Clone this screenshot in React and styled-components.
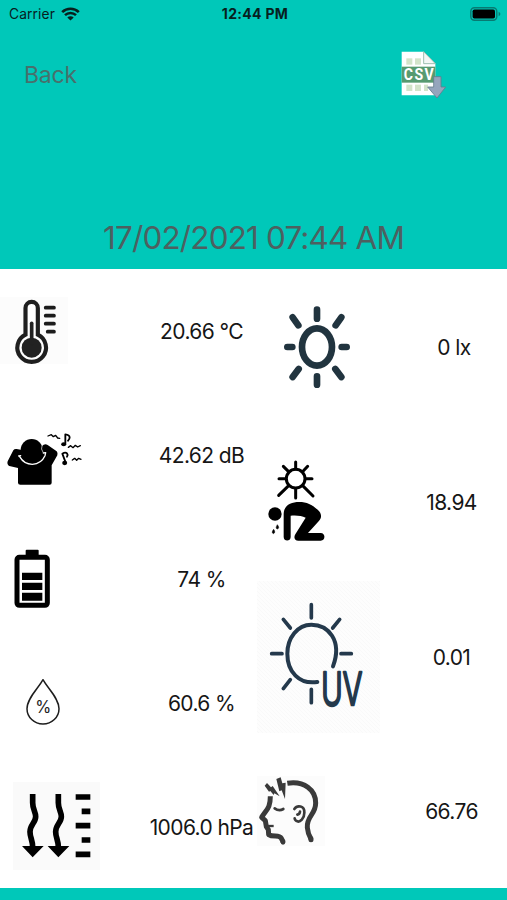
import React from 'react';
import styled, { createGlobalStyle } from 'styled-components';

const GlobalStyle = createGlobalStyle`
  *{
    box-sizing:border-box;
  }
  body{
    margin:0;
    background-color:#ffffff;
    font-family:Inter, "Liberation Sans", sans-serif;
  }
  svg{
    display:block;
    flex:none;
    overflow:visible;
  }
`;

const Screen = styled.div`
  width:507px;
  height:900px;
  display:flex;
  flex-direction:column;
  overflow:hidden;
  background-color:white;
`;

const Header = styled.header`
  height:269px;
  display:flex;
  flex-direction:column;
  background-color:#00c8b9;
`;

const StatusBar = styled.div`
  height:27px;
  padding:0 6px 0 9px;
  display:grid;
  grid-template-columns:1fr auto 1fr;
  align-items:center;
  color:#07201e;
`;
const Carrier = styled.div`
  display:flex;
  align-items:center;
  gap:6px;
  font-size:13.8px;
  letter-spacing:0.1px;
`;
const Clock = styled.div`
  font-size:14px;
  font-weight:700;
  letter-spacing:0.3px;
`;
const StatusRight = styled.div`
  display:flex;
  justify-content:flex-end;
`;

const NavBar = styled.nav`
  height:96px;
  padding:0 60px 0 24px;
  display:flex;
  align-items:center;
  justify-content:space-between;
`;
const BackButton = styled.button`
  padding:0;
  border:0;
  background:none;
  font-family:inherit;
  font-size:23px;
  letter-spacing:-0.2px;
  color:#48706c;
`;
const CsvButton = styled.button`
  padding:0;
  border:0;
  background:none;
`;
const DateTitle = styled.h1`
  margin:auto 0 0;
  height:61px;
  line-height:61px;
  text-align:center;
  font-size:31.4px;
  font-weight:400;
  letter-spacing:-0.8px;
  color:#4d6060;
`;

const Readings = styled.main`
  flex:1;
  display:grid;
  grid-template-columns:253px 254px;
`;
const Column = styled.section`
  display:grid;
  grid-template-columns:minmax(0, 1fr);
  grid-template-rows:${(props) => props.$rows};
`;
const Reading = styled.div`
  display:flex;
  align-items:center;
`;
const IconSlot = styled.div`
  width:${(props) => props.$width}px;
  flex:none;
  align-self:flex-start;
  padding-left:${(props) => props.$left}px;
  padding-top:${(props) => props.$top}px;
`;
const Value = styled.div`
  flex:1;
  min-width:0;
  padding-top:2px;
  display:flex;
  justify-content:center;
  white-space:nowrap;
  font-size:21px;
  line-height:26px;
  letter-spacing:-0.6px;
  color:#161616;
`;

const Footer = styled.footer`
  height:12px;
  background-color:#00c8b9;
`;

const WifiIcon = () => (
  <svg width="19" height="14" viewBox="0 0 19 14" fill="none" stroke="#07201e">
    <path d="M1.2 5.1 A12 12 0 0 1 17.8 5.1" strokeWidth="2.7" />
    <path d="M4 8.2 A7.8 7.8 0 0 1 15 8.2" strokeWidth="2.5" />
    <path d="M9.5 13.6 L6.3 10.5 A4.6 4.6 0 0 1 12.7 10.5 Z" fill="#07201e" stroke="none" />
  </svg>
);

const PhoneBattery = () => (
  <svg width="31" height="14" viewBox="0 0 31 14">
    <rect x="0.8" y="0.8" width="26" height="12.4" rx="3.6" fill="none" stroke="#087a72" strokeWidth="1.4" />
    <rect x="2.6" y="2.4" width="22.4" height="9.2" rx="1.8" fill="#000000" />
    <path d="M28.6 4.8 Q30.4 5.6 30.4 7 Q30.4 8.4 28.6 9.2 Z" fill="#087a72" />
  </svg>
);

const CsvIcon = () => (
  <svg width="46" height="48" viewBox="35 35 138 144">
    <path d="M37 37 H103 L138 73 V168 H37 Z" fill="#ffffff" />
    <path d="M103 37 V73 H138 Z" fill="#f4f7f5" stroke="#9dbfb0" strokeWidth="3" strokeLinejoin="round" />
    <g fill="#d3e4ca">
      <rect x="51" y="57" width="18" height="19" />
      <rect x="77" y="57" width="18" height="19" />
      <rect x="51" y="136" width="18" height="19" />
      <rect x="77" y="136" width="18" height="19" />
      <rect x="104" y="136" width="12" height="19" />
    </g>
    <rect x="37" y="82" width="101" height="48" fill="#579a70" />
    <text transform="translate(43 123) scale(0.9 1)" fontFamily="Roboto, sans-serif" fontSize="47" fontWeight="700" letterSpacing="5" fill="#ffffff">CSV</text>
    <path d="M133 112 H155 V143 H169 L143 176 L115 143 H133 Z" fill="#95a5bd" stroke="#647d8d" strokeWidth="2.5" />
  </svg>
);

const ThermometerIcon = () => (
  <svg width="68" height="67" viewBox="0 21 204 201">
    <rect y="21" width="204" height="201" fill="#fcfcfc" />
    <path
      d="M76.5 134 V54 A18.5 18.5 0 0 1 113.5 54 V134 A43 43 0 1 1 76.5 134 Z"
      fill="#ffffff" stroke="#1f1f1f" strokeWidth="12.5"
    />
    <circle cx="95" cy="173" r="30" fill="#222222" />
    <path d="M95 100 V160" stroke="#222222" strokeWidth="11" strokeLinecap="round" />
    <path d="M137 53 H162 M137 77 H162 M137 101 H162 M143 125 H162" stroke="#1c1c1c" strokeWidth="11" strokeLinecap="round" />
  </svg>
);

const NoiseIcon = () => (
  <svg width="84" height="58" viewBox="0 420 252 174" fill="none" stroke="#000000" strokeLinecap="round" strokeLinejoin="round">
    <path d="M50 477 L66 480 L126 468 Q134 460 143 465 L170 484 Q174 489 172 496 L155 526 V578 Q155 584 149 584 H61 Q54 584 54 578 V534 L28 528 Q20 524 23 514 L40 481 Q43 476 50 477 Z" fill="#000000" stroke="none" />
    <circle cx="95" cy="480" r="33" fill="#000000" stroke="none" />
    <path d="M56 498 L62 497 M59 500 Q72 523 97 523 Q124 521 135 497 L137 488 L130 489" stroke="#ffffff" strokeWidth="4" />
    <path d="M129 487 Q121 477 126 467" stroke="#ffffff" strokeWidth="2" />
    <path d="M144 438 L154 434 L160 440 L167 436 L173 444 L179 445" strokeWidth="4" />
    <path d="M205 472 L212 467 L219 473 L226 466 L233 471 L241 467" strokeWidth="4" />
    <path d="M217 510 L224 505 L230 511 L236 505 L243 508" strokeWidth="4" />
    <path d="M196 461 V433 Q208 434 209 442 Q209 448 204 452" strokeWidth="5.5" />
    <ellipse cx="191" cy="463" rx="7.5" ry="6" fill="#000000" stroke="none" />
    <path d="M197 518 L187 491 Q196 485 201 490 Q205 495 201 500" strokeWidth="5.5" />
    <ellipse cx="194" cy="519" rx="7.5" ry="6.5" fill="#000000" stroke="none" />
  </svg>
);

const BatteryIcon = () => (
  <svg width="36" height="60" viewBox="43 27 108 180">
    <rect x="78" y="29" width="39" height="20" rx="3" />
    <rect x="52" y="52" width="91" height="144" rx="7" fill="none" stroke="#000000" strokeWidth="15" />
    <path d="M67 98 H128 V120 H67 Z M67 128 H128 V150 H67 Z M67 158 H128 V182 H67 Z" />
  </svg>
);

const HumidityIcon = () => (
  <svg width="36" height="48" viewBox="76 415 108 144">
    <path
      d="M130 420 C117 445 82 475 82 507 A48 46 0 0 0 178 507 C178 475 143 445 130 420 Z"
      fill="none" stroke="#1d1d1d" strokeWidth="4.5" strokeLinejoin="round"
    />
    <text x="107" y="521" fontSize="50" fill="#222222" textLength="48" lengthAdjust="spacingAndGlyphs">%</text>
  </svg>
);

const PressureIcon = () => (
  <svg width="87" height="88" viewBox="39 36 261 264">
    <rect x="39" y="36" width="261" height="264" fill="#fafafa" />
    <g fill="none" stroke="#000000" strokeWidth="17">
      <path d="M98 72 V98 C98 118 107 125 107 140 C107 157 90 165 90 185 C90 203 98 210 98 232" />
      <path d="M175 72 V98 C175 118 184 125 184 140 C184 157 167 165 167 185 C167 203 175 210 175 232" />
    </g>
    <path d="M66 228 H131 L98 262 Z M143 228 H208 L175 262 Z" />
    <path d="M227 81 H271 M245 124 H271 M227 167 H271 M245 210 H271 M227 253 H271" stroke="#000000" strokeWidth="17" />
  </svg>
);

const LightIcon = () => (
  <svg width="70" height="84" viewBox="67 44 210 252" fill="none" stroke="#21343f" strokeLinecap="round">
    <ellipse cx="172" cy="170" rx="45" ry="56" strokeWidth="20" />
    <path
      d="M172 58 V85 M172 258 V283 M83 170 H98 M246 170 H261 M99 81 L116 105 M245 81 L228 105 M99 260 L117 236 M245 260 L227 236"
      strokeWidth="20"
    />
  </svg>
);

const HeatIcon = () => (
  <svg width="60" height="84" viewBox="52 28 180 252">
    <g fill="none" stroke="#000000" strokeWidth="9" strokeLinecap="round">
      <circle cx="138" cy="87" r="28" />
      <path d="M138 37 V58 M88 87 H108 M168 87 H187 M101 50 L116 65 M174 50 L160 65 M87 137 L117 108 M190 139 L159 108 M138 118 V145" />
    </g>
    <circle cx="76" cy="193" r="20" />
    <path d="M102 194 C102 166 125 157 148 157 C172 157 186 165 204 180 C217 191 217 205 207 215 L175 250 H213 C228 250 228 273 213 273 H146 C135 273 131 263 137 254 L168 204 C156 198 139 196 123 198 V262 C123 276 102 276 102 262 Z" />
    <path d="M83 225 Q91 235 83 238 Q76 236 83 225 Z M72 239 Q79 249 71 252 Q64 249 72 239 Z" stroke="#000000" strokeWidth="1.5" />
  </svg>
);

const UvIcon = () => (
  <svg width="123" height="152" viewBox="36 18 369 456">
    <defs>
      <pattern id="hatch" width="12" height="12" patternUnits="userSpaceOnUse">
        <path d="M0 0 L12 12" stroke="#f7f7f7" strokeWidth="2" />
      </pattern>
    </defs>
    <rect x="36" y="18" width="369" height="456" fill="#fdfdfd" />
    <rect x="36" y="18" width="369" height="456" fill="url(#hatch)" />
    <g fill="none" stroke="#24394c" strokeWidth="12" strokeLinecap="round">
      <path d="M264 274 C293 196 249 149 199 149 C158 149 127 188 127 236 C127 290 162 329 217 321" />
      <path d="M199 89 V129 M115 133 L136 159 M284 133 L263 159 M80 236 H111 M288 236 H319 M115 341 L136 314 M199 343 V383" strokeWidth="11" />
    </g>
    <text
      x="229" y="390" textLength="123" lengthAdjust="spacingAndGlyphs"
      fontFamily="Inter, sans-serif" fontSize="136" fontWeight="300"
      fill="#24394c" stroke="#24394c" strokeWidth="8" strokeLinejoin="round"
    >
      UV
    </text>
  </svg>
);

const HeadacheIcon = () => (
  <svg width="68" height="70" viewBox="36 32 204 210">
    <rect x="36" y="32" width="204" height="210" fill="#fcfcfc" />
    <g fill="none" stroke="#3a3a3a" strokeLinejoin="round">
      <path d="M127 54 C178 46 212 74 212 113 C212 149 184 151 187 187 C188 202 193 212 198 221" strokeWidth="15" />
      <path d="M198 220 V223" strokeWidth="15" strokeLinecap="round" />
      <path d="M76 93 C76 130 64 132 50 156 L61 166 L64 184 L70 193 L71 208 C84 217 102 207 109 219 L115 231" strokeWidth="15" />
      <path d="M114 229 V231" strokeWidth="14" strokeLinecap="round" />
      <path d="M66 182 H86" strokeWidth="7" />
      <path d="M89 129 Q102 139 115 131" strokeWidth="8" strokeLinecap="round" />
      <path d="M148 131 C157 118 179 121 178 142 C178 160 165 171 157 168 Q150 166 149 159 M157 148 Q164 147 165 139" strokeWidth="8" strokeLinecap="round" />
    </g>
    <path d="M66 53 L78 66 L83 62 L104 93 L88 84 L86 89 L76 77 L72 79 L59 61 Z M94 41 L107 36 L112 54 L122 52 L120 101 L110 75 L103 78 Z" fill="#3a3a3a" />
  </svg>
);

const leftReadings = [
  { icon: <ThermometerIcon />, value: '20.66 °C', left: 0, top: 28 },
  { icon: <NoiseIcon />, value: '42.62 dB', left: 0, top: 37 },
  { icon: <BatteryIcon />, value: '74 %', left: 14, top: 32 },
  { icon: <HumidityIcon />, value: '60.6 %', left: 25, top: 37 },
  { icon: <PressureIcon />, value: '1006.0 hPa', left: 13, top: 17 },
];

const rightReadings = [
  { icon: <LightIcon />, value: '0 lx', left: 29, top: 36, width: 148 },
  { icon: <HeatIcon />, value: '18.94', left: 14, top: 35, width: 143 },
  { icon: <UvIcon />, value: '0.01', left: 4, top: 2, width: 143 },
  { icon: <HeadacheIcon />, value: '66.76', left: 4, top: 42, width: 143 },
];

const App = () => {
  return (
    <>
      <GlobalStyle />
      <Screen>
        <Header>
          <StatusBar>
            <Carrier>Carrier <WifiIcon /></Carrier>
            <Clock>12:44 PM</Clock>
            <StatusRight><PhoneBattery /></StatusRight>
          </StatusBar>
          <NavBar>
            <BackButton>Back</BackButton>
            <CsvButton aria-label="CSV"><CsvIcon /></CsvButton>
          </NavBar>
          <DateTitle>17/02/2021 07:44 AM</DateTitle>
        </Header>

        <Readings>
          <Column $rows="repeat(4, 124px) 123px">
            {leftReadings.map((item) => (
              <Reading key={item.value}>
                <IconSlot $width={150} $left={item.left} $top={item.top}>{item.icon}</IconSlot>
                <Value>{item.value}</Value>
              </Reading>
            ))}
          </Column>
          <Column $rows="repeat(3, 155px) 154px">
            {rightReadings.map((item) => (
              <Reading key={item.value}>
                <IconSlot $width={item.width} $left={item.left} $top={item.top}>{item.icon}</IconSlot>
                <Value>{item.value}</Value>
              </Reading>
            ))}
          </Column>
        </Readings>

        <Footer />
      </Screen>
    </>
  );
};

export default App;
